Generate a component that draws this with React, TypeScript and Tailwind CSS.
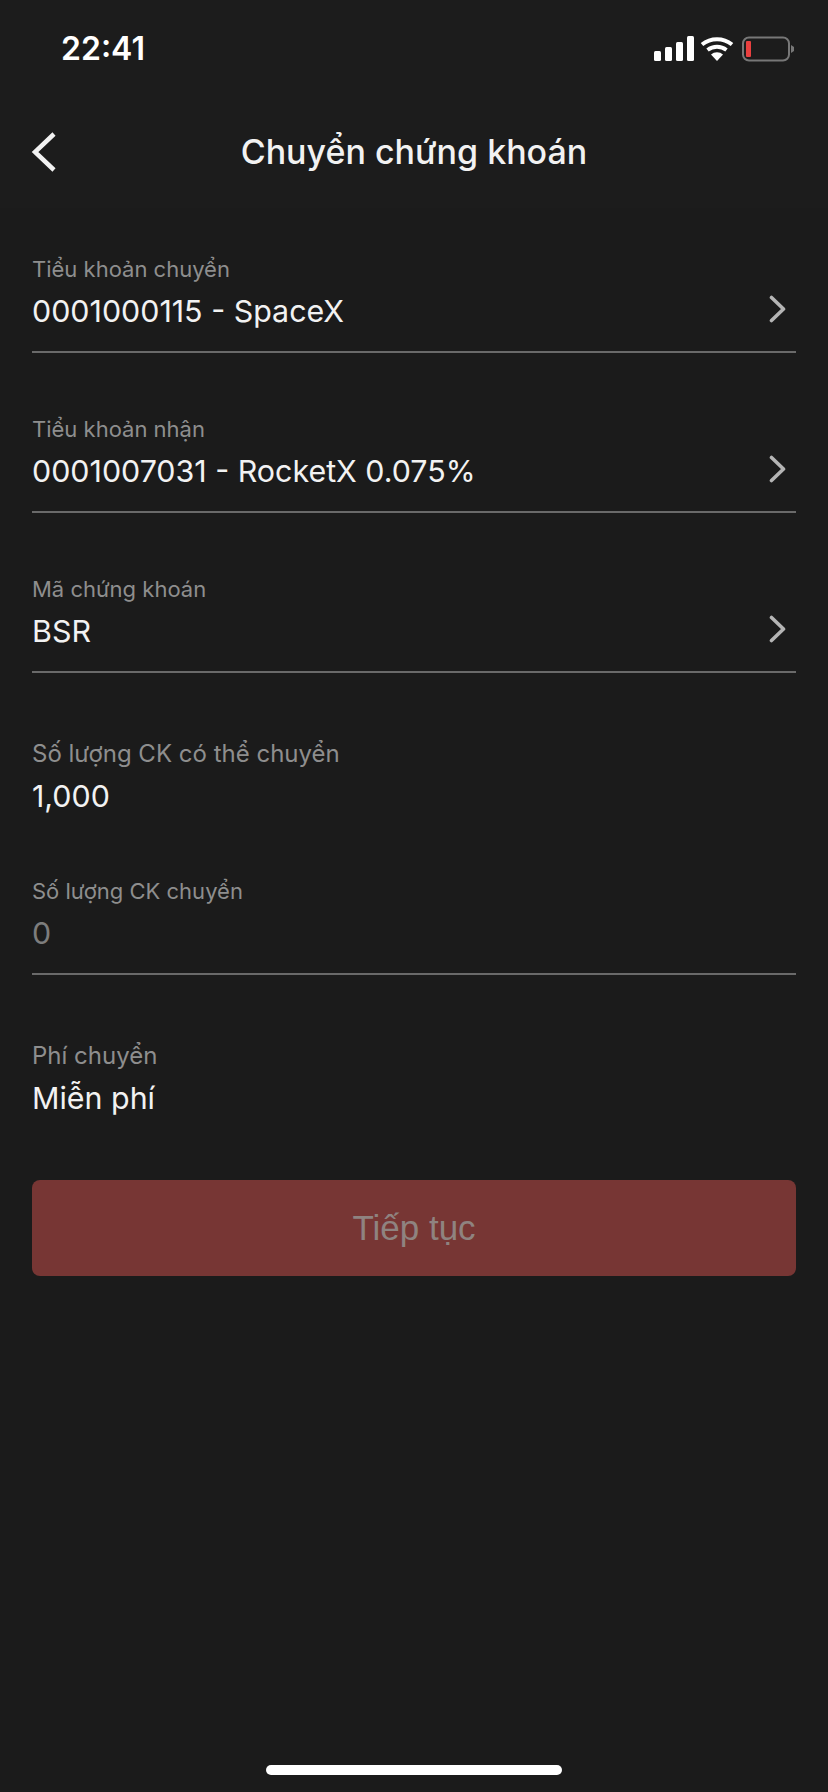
import React from "react";

const Chevron = () => (
  <svg width="18" height="28" viewBox="0 0 18 28" fill="none" className="shrink-0">
    <path d="M2.5 2.5 L14.5 14 L2.5 25.5" stroke="#b5b5b5" strokeWidth="3.6" strokeLinecap="round" strokeLinejoin="round" />
  </svg>
);

function Field({ label, value, chevron, divider, muted, large, className }: { label: string; value: string; chevron?: boolean; divider?: boolean; muted?: boolean; large?: boolean; className?: string }) {
  return (
    <div className={className}>
      <div className="flex items-end justify-between">
        <div>
          <div className={`${large ? "text-[24px]" : "text-[22px]"} leading-[30px] text-[#8e8e8e]`}>{label}</div>
          <div className={`mt-[11px] text-[30.4px] leading-[32px] ${muted ? "text-[#7d7d7d]" : "text-[#f2f2f2]"}`}>{value}</div>
        </div>
        {chevron && <div className="pb-[4px] pr-[9px]"><Chevron /></div>}
      </div>
      {divider && <div className="mt-[24px] h-[2px] bg-[#6a6a6a]" />}
    </div>
  );
}

export default function App() {
  return (
    <div className="relative flex h-[1792px] w-[828px] flex-col overflow-hidden bg-[#1b1b1b] font-['Inter','Liberation_Sans',sans-serif]">
      <div className="h-[208px] bg-[#1c1c1c]">
        <div className="flex h-[100px] items-start justify-between pl-[61px] pr-[34px] pt-[29px]">
          <span className="text-[32px] font-semibold leading-[40px] text-white">22:41</span>
          <svg width="140" height="28" viewBox="0 0 140 28" className="mt-[5px]" fill="none">
            <rect x="0" y="17" width="7" height="10" rx="1.5" fill="#fff" />
            <rect x="11" y="13" width="7" height="14" rx="1.5" fill="#fff" />
            <rect x="22" y="8" width="7" height="19" rx="1.5" fill="#fff" />
            <rect x="33" y="2" width="7" height="25" rx="1.5" fill="#fff" />
            <path d="M48 10.5 A24 24 0 0 1 78 10.5" stroke="#fff" strokeWidth="4" />
            <path d="M53.5 16 A16 16 0 0 1 72.5 16" stroke="#fff" strokeWidth="4" />
            <path d="M63 27 L57 20.5 A9 9 0 0 1 69 20.5 Z" fill="#fff" />
            <rect x="89" y="3.5" width="46" height="23" rx="6" stroke="#777" strokeWidth="2" />
            <rect x="92" y="7" width="5" height="16" rx="1" fill="#e9403f" />
            <path d="M137 11 L140 13 V17 L137 19 Z" fill="#777" />
          </svg>
        </div>
        <div className="relative flex h-[104px] items-center justify-center">
          <svg width="26" height="42" viewBox="0 0 26 42" fill="none" className="absolute left-[31px] top-[31px]">
            <path d="M23 3 L4 21 L23 39" stroke="#f2f2f2" strokeWidth="4.5" />
          </svg>
          <h1 className="text-[34px] font-medium leading-[40px] text-[#f2f2f2]">Chuyển chứng khoán</h1>
        </div>
      </div>

      <div className="flex flex-col px-[32px] pt-[46px]">
        <Field label="Tiểu khoản chuyển" value="0001000115 - SpaceX" chevron divider />
        <Field className="mt-[61px]" label="Tiểu khoản nhận" value="0001007031 - RocketX 0.075%" chevron divider />
        <Field className="mt-[61px]" label="Mã chứng khoán" value="BSR" chevron divider />
        <Field className="mt-[66px]" large label="Số lượng CK có thể chuyển" value="1,000" />
        <Field className="mt-[64px]" label="Số lượng CK chuyển" value="0" muted divider />
        <Field className="mt-[66px]" large label="Phí chuyển" value="Miễn phí" />
        <div className="mt-[66px] flex h-[96px] items-center justify-center rounded-[8px] bg-[#773634]">
          <span className="font-['Liberation_Sans',sans-serif] text-[35px] text-[#8f8380]">Tiếp tục</span>
        </div>
      </div>

      <div className="absolute bottom-[17px] left-[266px] h-[10px] w-[296px] rounded-full bg-white" />
    </div>
  );
}
